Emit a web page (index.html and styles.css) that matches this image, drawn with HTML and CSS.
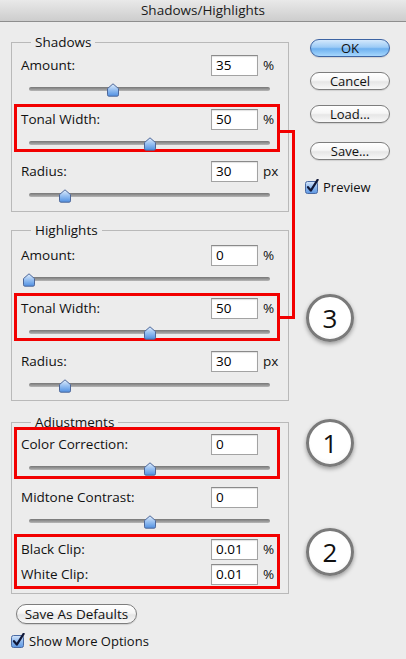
FILE: index.html
```html
<!DOCTYPE html>
<html>
<head>
<meta charset="utf-8">
<link rel="stylesheet" href="styles.css">
</head>
<body>
<div class="titlebar">Shadows/Highlights</div>
<div class="dialog">
  <div class="main">
    <div class="group g-shadows">
      <div class="legend">Shadows</div>
      <div class="param first">
        <div class="row"><span class="lbl">Amount:</span><span class="field">35</span><span class="unit">%</span></div>
        <div class="slider"><div class="track"><svg class="thumb" style="left:35%" width="14" height="14" viewBox="0 0 14 14"><use href="#thumb"/></svg></div></div>
      </div>
      <div class="param hl">
        <div class="row"><span class="lbl">Tonal Width:</span><span class="field">50</span><span class="unit">%</span></div>
        <div class="slider"><div class="track"><svg class="thumb" style="left:50%" width="14" height="14" viewBox="0 0 14 14"><use href="#thumb"/></svg></div></div>
      </div>
      <div class="param">
        <div class="row"><span class="lbl">Radius:</span><span class="field">30</span><span class="unit">px</span></div>
        <div class="slider"><div class="track"><svg class="thumb" style="left:15%" width="14" height="14" viewBox="0 0 14 14"><use href="#thumb"/></svg></div></div>
      </div>
    </div>

    <div class="group g-highlights">
      <div class="legend">Highlights</div>
      <div class="param first">
        <div class="row"><span class="lbl">Amount:</span><span class="field">0</span><span class="unit">%</span></div>
        <div class="slider"><div class="track"><svg class="thumb" style="left:0%" width="14" height="14" viewBox="0 0 14 14"><use href="#thumb"/></svg></div></div>
      </div>
      <div class="param hl">
        <div class="row"><span class="lbl">Tonal Width:</span><span class="field">50</span><span class="unit">%</span></div>
        <div class="slider"><div class="track"><svg class="thumb" style="left:50%" width="14" height="14" viewBox="0 0 14 14"><use href="#thumb"/></svg></div></div>
      </div>
      <div class="param">
        <div class="row"><span class="lbl">Radius:</span><span class="field">30</span><span class="unit">px</span></div>
        <div class="slider"><div class="track"><svg class="thumb" style="left:15%" width="14" height="14" viewBox="0 0 14 14"><use href="#thumb"/></svg></div></div>
      </div>
    </div>

    <div class="group g-adjust">
      <div class="legend">Adjustments</div>
      <div class="param hl tall first">
        <div class="row"><span class="lbl">Color Correction:</span><span class="field">0</span><span class="unit"></span></div>
        <div class="slider"><div class="track"><svg class="thumb" style="left:50%" width="14" height="14" viewBox="0 0 14 14"><use href="#thumb"/></svg></div></div>
      </div>
      <div class="param">
        <div class="row"><span class="lbl">Midtone Contrast:</span><span class="field">0</span><span class="unit"></span></div>
        <div class="slider"><div class="track"><svg class="thumb" style="left:50%" width="14" height="14" viewBox="0 0 14 14"><use href="#thumb"/></svg></div></div>
      </div>
      <div class="clips hl">
        <div class="row"><span class="lbl">Black Clip:</span><span class="field">0.01</span><span class="unit">%</span></div>
        <div class="row"><span class="lbl">White Clip:</span><span class="field">0.01</span><span class="unit">%</span></div>
      </div>
    </div>

    <button class="pill defaults">Save As Defaults</button>
    <div class="check more"><svg class="cb" width="14" height="15" viewBox="0 0 14 15"><use href="#cb"/></svg><span>Show More Options</span></div>
  </div>

  <div class="side">
    <button class="pill ok">OK</button>
    <button class="pill cancel">Cancel</button>
    <button class="pill load">Load...</button>
    <button class="pill save">Save...</button>
    <div class="check preview"><svg class="cb" width="14" height="15" viewBox="0 0 14 15"><use href="#cb"/></svg><span>Preview</span></div>
  </div>
</div>

<div class="bracket"></div>
<div class="badge b3">3</div>
<div class="badge b1">1</div>
<div class="badge b2">2</div>

<svg class="defs" width="0" height="0">
  <defs>
    <linearGradient id="tg" x1="0" y1="0" x2="0" y2="1">
      <stop offset="0" stop-color="#e4effc"/>
      <stop offset="0.45" stop-color="#9cc3f2"/>
      <stop offset="1" stop-color="#4f8fe2"/>
    </linearGradient>
    <linearGradient id="cg" x1="0" y1="0" x2="0" y2="1">
      <stop offset="0" stop-color="#d6e6fa"/>
      <stop offset="0.5" stop-color="#8fb9ee"/>
      <stop offset="1" stop-color="#5d97e2"/>
    </linearGradient>
    <symbol id="thumb" viewBox="0 0 14 14">
      <path d="M1.5 5.6 L7 0.8 L12.5 5.6 L12.5 11.8 Q12.5 13.2 11.1 13.2 L2.9 13.2 Q1.5 13.2 1.5 11.8 Z" fill="url(#tg)" stroke="#4d6799" stroke-width="1"/>
    </symbol>
    <symbol id="cb" viewBox="0 0 14 15">
      <rect x="0.5" y="2.5" width="12" height="12" rx="2" fill="url(#cg)" stroke="#4a6aa3"/>
      <path d="M3 8.2 L5.8 11.6 L12.6 0.8" fill="none" stroke="#101838" stroke-width="2.2" stroke-linecap="round" stroke-linejoin="round"/>
    </symbol>
  </defs>
</svg>
</body>
</html>
```

FILE: styles.css
```css
* { box-sizing: border-box; }

html, body {
  margin: 0;
  padding: 0;
}

body {
  width: 406px;
  height: 659px;
  overflow: hidden;
  background: #ececec;
  font-family: "Open Sans", "DejaVu Sans", sans-serif;
  font-size: 13px;
  color: #111;
  position: relative;
}

.titlebar {
  height: 22px;
  line-height: 21px;
  text-align: center;
  font-size: 13.5px;
  color: #1a1a1a;
  background: linear-gradient(#e9e9e9, #cdcdcd);
  border-bottom: 1px solid #8e8e8e;
}

.dialog {
  display: flex;
  padding-left: 11px;
}

.main {
  width: 278px;
  display: flex;
  flex-direction: column;
}

.group {
  border: 1px solid #b9b9b9;
  padding: 0 11px 10px 5px;
}

.g-shadows { margin-top: 20px; }
.g-highlights { margin-top: 18px; padding-bottom: 9px; }
.g-adjust { margin-top: 21px; padding-bottom: 7px; }

.legend {
  display: table;
  height: 16px;
  line-height: 16px;
  margin: -9px 0 0 14px;
  padding: 0 4px;
  background: #ececec;
  color: #111;
  font-size: 13.5px;
}

.param {
  height: 42px;
  padding-top: 1px;
  margin-top: 11px;
}

.g-shadows .param.first { margin-top: 3px; }
.g-shadows .param.hl { margin-top: 12px; }
.g-shadows .param.hl + .param { margin-top: 10px; }
.g-highlights .param.first { margin-top: 5px; }
.g-adjust .param.first { margin-top: 0; }
.g-adjust .param + .param { margin-top: 9px; }

.param.tall {
  height: 46px;
  padding-top: 3px;
}

.hl {
  outline: 3px solid #f20000;
}

.row {
  display: flex;
  align-items: center;
  height: 22px;
}

.lbl {
  flex: 1;
  padding-left: 4px;
  font-size: 13.5px;
}

.field {
  width: 47px;
  height: 21px;
  line-height: 19px;
  padding-left: 4px;
  background: #fff;
  border: 1px solid #a3a3a3;
  border-top-color: #8a8a8a;
  box-shadow: inset 0 1px 1px rgba(0,0,0,0.12);
  font-size: 13.5px;
  color: #000;
}

.unit {
  width: 19px;
  padding-left: 5px;
  font-size: 13.5px;
}

.slider {
  height: 19px;
  padding-top: 11px;
  padding-left: 12px;
  padding-right: 7px;
}

.track {
  position: relative;
  height: 4px;
  border-radius: 2px;
  background: linear-gradient(#777, #9a9a9a 60%, #b8b8b8);
}

.thumb {
  position: absolute;
  top: -4px;
  margin-left: -7px;
  display: block;
}

.clips {
  margin-top: 10px;
  padding-top: 1px;
  padding-bottom: 1px;
  display: flex;
  flex-direction: column;
  gap: 3px;
}

.pill {
  display: block;
  height: 18px;
  padding: 0;
  border: 1px solid #7d7d7d;
  border-radius: 10px;
  background: linear-gradient(#ffffff, #f6f6f6 45%, #e6e6e6 55%, #f8f8f8);
  font-family: "Open Sans", "DejaVu Sans", sans-serif;
  font-size: 13px;
  line-height: 16px;
  color: #111;
  text-align: center;
  box-shadow: 0 1px 1px rgba(0,0,0,0.12);
}

.defaults {
  width: 121px;
  height: 20px;
  margin: 10px 0 0 5px;
  line-height: 18px;
  font-size: 13.5px;
}

.check {
  display: flex;
  align-items: center;
  gap: 4px;
  height: 15px;
}

.cb { display: block; flex: none; }

.more {
  margin-top: 9px;
}

.side {
  width: 80px;
  margin-left: 21px;
  padding-top: 17px;
  display: flex;
  flex-direction: column;
}

.side .pill { width: 80px; }
.cancel, .load { margin-top: 15px; }
.save { margin-top: 19px; }

.ok {
  border-color: #3d64a3;
  background: linear-gradient(#d3e8fc, #9ccbf6 45%, #6eb0ef 55%, #a6d7fd);
}

.preview {
  margin-top: 19px;
  margin-left: -5px;
}

.bracket {
  position: absolute;
  left: 279px;
  top: 130px;
  width: 16px;
  height: 189px;
  border: 3px solid #f20000;
  border-left: none;
}

.badge {
  position: absolute;
  left: 306px;
  width: 48px;
  height: 48px;
  border-radius: 50%;
  border: 3px solid #7a7a7a;
  background: radial-gradient(circle at 50% 40%, #ffffff 60%, #f2f2f2);
  box-shadow: 0 2px 4px rgba(0,0,0,0.35);
  display: flex;
  align-items: center;
  justify-content: center;
  font-family: "Open Sans", "DejaVu Sans", sans-serif;
  font-size: 26px;
  line-height: 1;
  color: #111;
}

.b3 { top: 294px; }
.b1 { top: 419px; }
.b2 { top: 528px; }

.defs { position: absolute; }
```
